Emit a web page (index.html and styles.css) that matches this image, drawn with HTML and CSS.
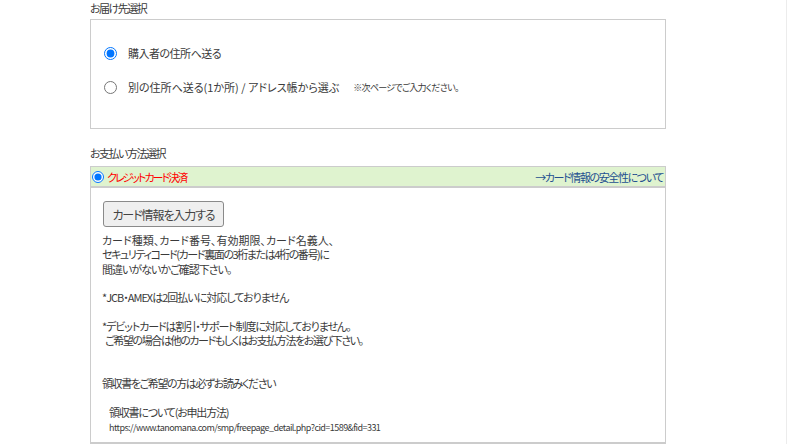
FILE: index.html
```html
<!DOCTYPE html>
<html lang="ja">
<head>
<meta charset="utf-8">
<link rel="stylesheet" href="styles.css">
</head>
<body>
<div class="page">
  <div class="wrap">
    <h2 class="heading">お届け先選択</h2>
    <div class="ship-box">
      <label class="ship-row">
        <input type="radio" name="ship" class="radio" checked>
        <span class="ship-text ship-text-1">購入者の住所へ送る</span>
      </label>
      <label class="ship-row">
        <input type="radio" name="ship" class="radio">
        <span class="ship-text ship-text-2">別の住所へ送る(1か所) / アドレス帳から選ぶ</span>
        <span class="ship-note">※次ページでご入力ください。</span>
      </label>
    </div>

    <h2 class="heading heading-pay">お支払い方法選択</h2>
    <div class="pay-box">
      <div class="pay-head">
        <label class="pay-method">
          <input type="radio" name="pay" class="radio radio-small" checked>
          <span class="pay-name">クレジットカード決済</span>
        </label>
        <a class="pay-link" href="#">→カード情報の安全性について</a>
      </div>
      <div class="pay-body">
        <button class="card-btn" type="button">カード情報を入力する</button>
        <div class="info">
          <p class="para"><span class="t0">カード種類、カード番号、有効期限、カード名義人、</span><br><span class="t14">セキュリティコード(カード裏面の3桁または4桁の番号)に</span><br><span class="t10">間違いがないかご確認下さい。</span></p>
          <p class="para"><span class="t10">*JCB・AMEXは2回払いに対応しておりません</span></p>
          <p class="para para-gap2"><span class="t11">*デビットカードは割引・サポート制度に対応しておりません。</span><br><span class="t14 indent-s">ご希望の場合は他のカードもしくはお支払方法をお選び下さい。</span></p>
          <p class="para"><span class="t14">領収書をご希望の方は必ずお読みください</span></p>
          <p class="para para-last indent"><span class="t12">領収書について(お申出方法)</span><br><span class="url">https://www.tanomana.com/smp/freepage_detail.php?cid=1589&amp;fid=331</span></p>
        </div>
      </div>
    </div>
  </div>
</div>
</body>
</html>
```
FILE: styles.css
```css
html, body {
  margin: 0;
  padding: 0;
  background: #fff;
}
body {
  font-family: "Noto Sans CJK JP", "Noto Sans", sans-serif;
  font-size: 11px;
  color: #3a3a3a;
  font-feature-settings: "palt";
}
.page {
  width: 786px;
  height: 444px;
  overflow: hidden;
  border-right: 1px solid #ececec;
}
.wrap {
  margin-left: 90px;
  width: 576px;
}
.heading {
  margin: 0;
  font-size: 11px;
  font-weight: normal;
  line-height: 16px;
  height: 16px;
  letter-spacing: -1.5px;
}
.ship-box {
  margin-top: 3px;
  box-sizing: border-box;
  height: 110px;
  border: 1px solid #ccc;
  padding: 23px 0 0 13px;
  display: flex;
  flex-direction: column;
  gap: 14px;
}
.ship-row {
  display: flex;
  align-items: center;
  height: 20px;
}
.radio {
  margin: 0;
  width: 13px;
  height: 13px;
  flex: none;
}
.ship-text {
  margin-left: 11px;
}
.ship-text-1 {
  letter-spacing: -0.5px;
}
.ship-text-2 {
  letter-spacing: 0;
}
.ship-note {
  margin-left: 14px;
  font-size: 9px;
  letter-spacing: -0.7px;
}
.heading-pay {
  margin-top: 16px;
}
.pay-box {
  margin-top: 5px;
}
.pay-head {
  display: flex;
  align-items: center;
  justify-content: space-between;
  height: 19px;
  border: 1px solid #ccc;
  border-bottom: 2px solid #ccc;
  background: #dff3cf;
  padding: 0 2px 0 1px;
}
.pay-method {
  display: flex;
  align-items: center;
}
.radio-small {
  width: 12px;
  height: 12px;
}
.pay-name {
  margin-left: 3px;
  color: #f00;
  letter-spacing: -2px;
}
.pay-link {
  color: #234f8f;
  text-decoration: none;
  letter-spacing: -1.4px;
}
.pay-body {
  border-left: 1px solid #ccc;
  border-right: 1px solid #ccc;
  border-bottom: 2px solid #ccc;
  padding: 13px 12px 7px 11px;
}
.card-btn {
  display: block;
  width: 121px;
  height: 26px;
  margin: 0 0 0 1px;
  padding: 0;
  border: 1px solid #8a8a8a;
  border-radius: 3px;
  background: #efefef;
  font-family: "Noto Sans CJK JP", sans-serif;
  font-size: 12px;
  color: #444;
  letter-spacing: -1.1px;
  font-feature-settings: "palt";
}
.info {
  margin-top: 6px;
  line-height: 14.3px;
}
.para {
  margin: 0 0 14.3px;
}
.para-gap2 {
  margin-bottom: 28.6px;
}
.para-last {
  margin-bottom: 0;
}
.t0 { letter-spacing: 0; }
.t10 { letter-spacing: -1px; }
.t11 { letter-spacing: -1.1px; }
.t12 { letter-spacing: -1.2px; }
.t14 { letter-spacing: -1.4px; }
.indent {
  padding-left: 7px;
}
.indent-s {
  padding-left: 3px;
}
.url {
  font-size: 9px;
  letter-spacing: -0.55px;
}
```
